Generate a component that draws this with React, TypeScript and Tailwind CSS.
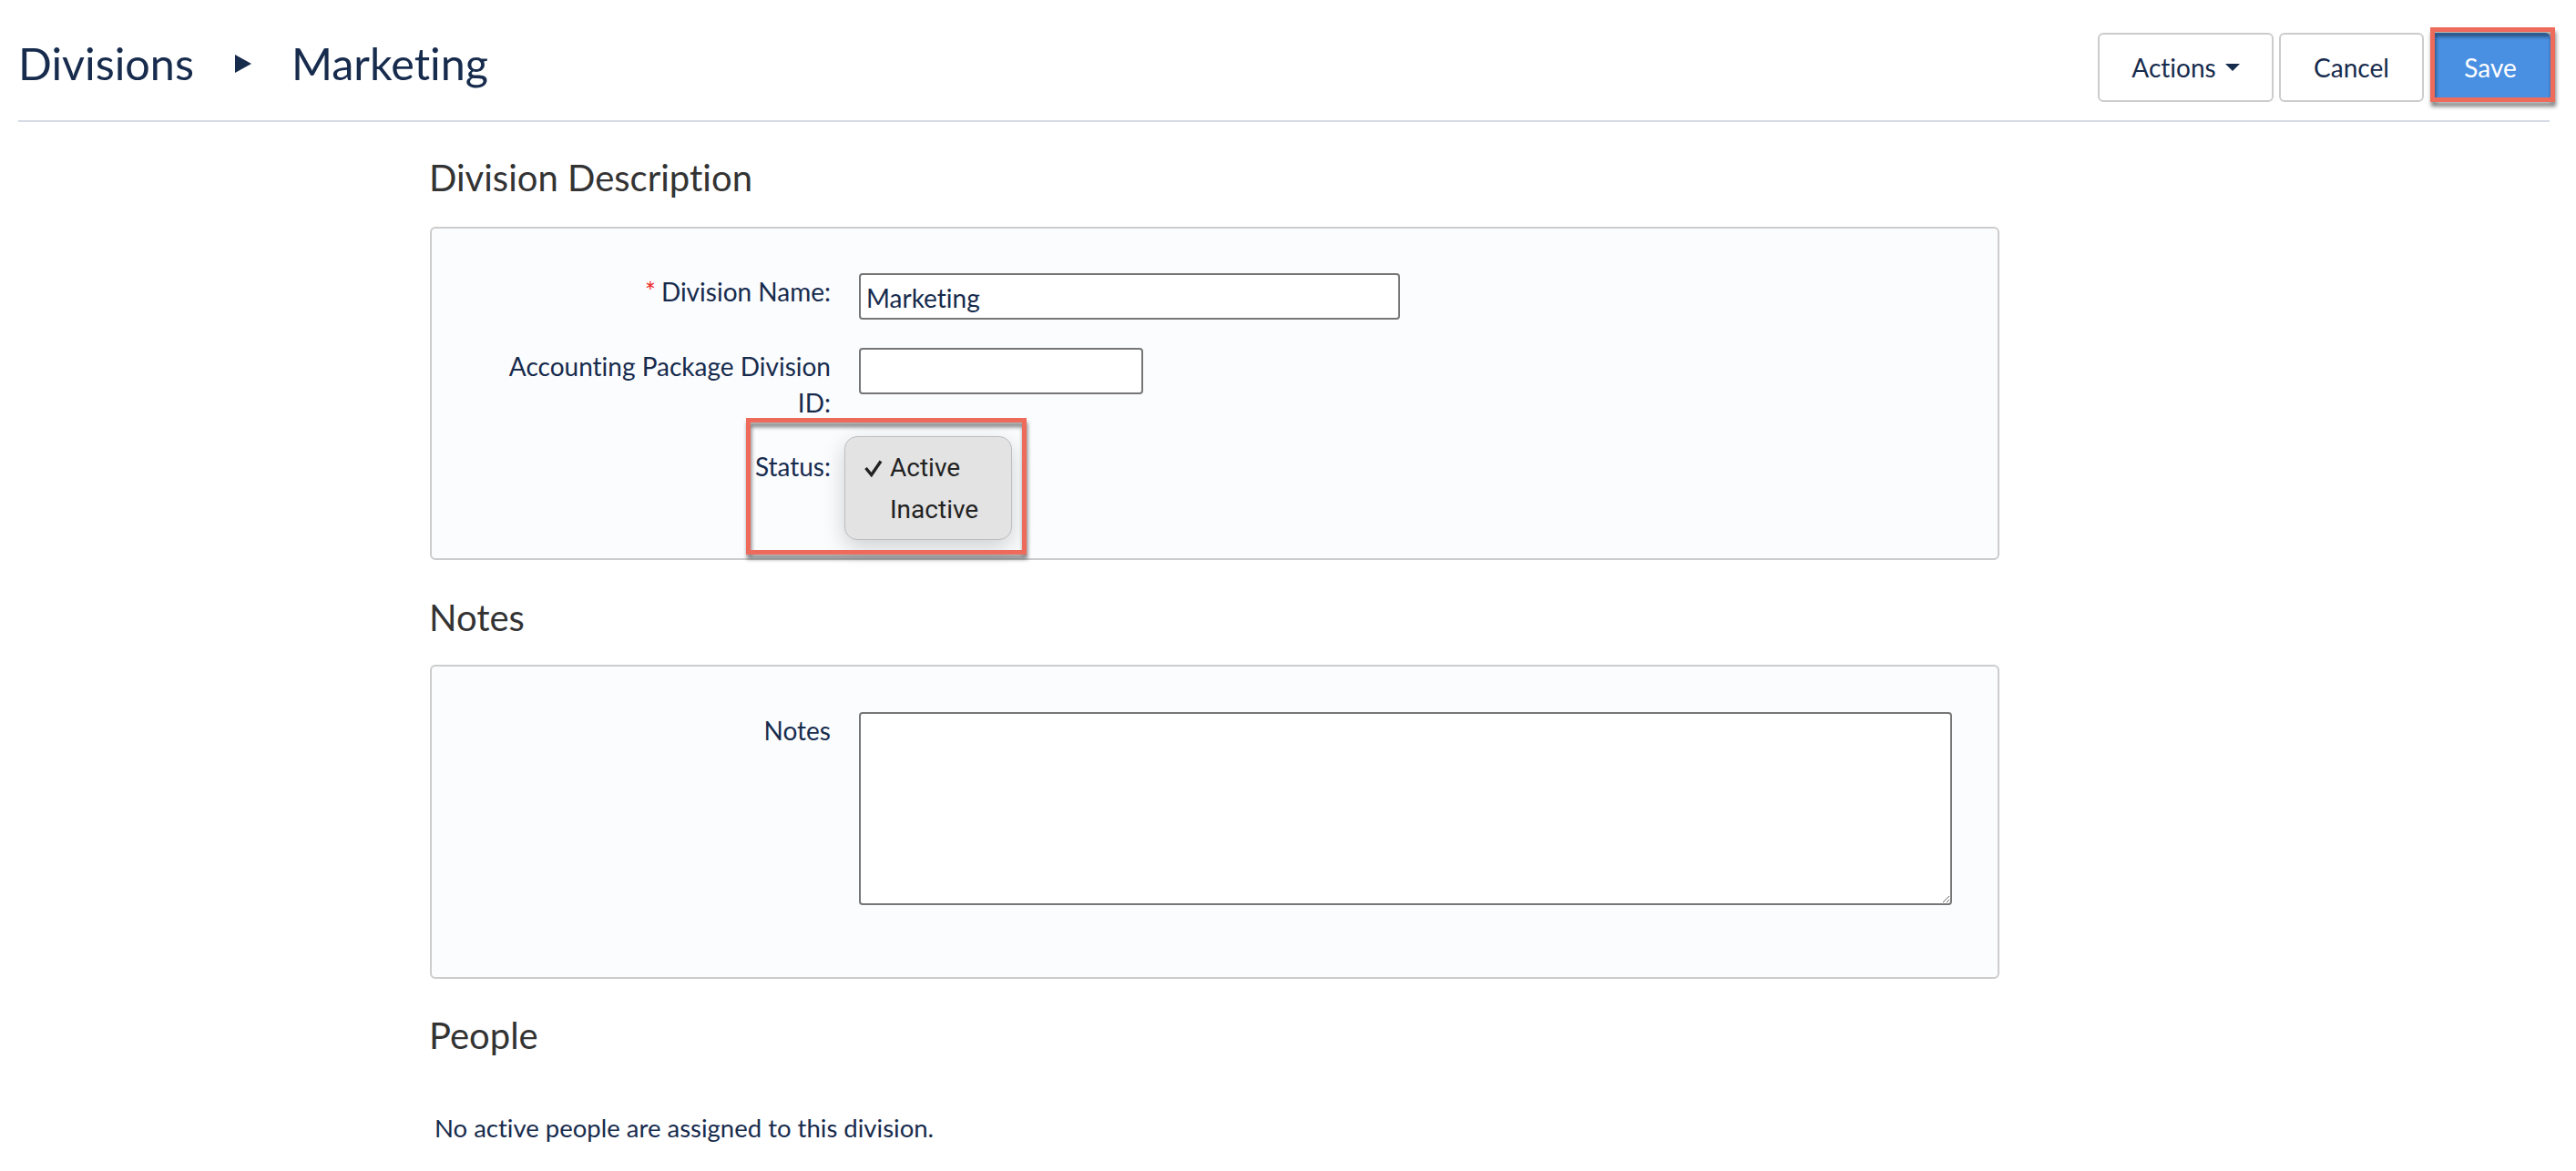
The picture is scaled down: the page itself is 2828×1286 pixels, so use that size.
function FieldLabel({ children }: { children: React.ReactNode }) {
  return (
    <label className="w-[370px] ml-[68px] shrink-0 text-right text-[#172b4d] text-[28px] leading-[40px]">
      {children}
    </label>
  );
}

function SectionTitle({ children, className }: { children: React.ReactNode; className: string }) {
  return <h2 className={`-ml-[1px] text-[#333333] text-[40px] leading-[44px] ${className}`}>{children}</h2>;
}

export default function App() {
  return (
    <div className="relative h-[1286px] w-full overflow-hidden bg-white font-['Lato',sans-serif] [font-variant-ligatures:none]">
      <header className="mx-[20px] mr-[29px] h-[134px] border-b-2 border-[#d5dae3] flex justify-between items-start">
        <div className="flex items-center text-[#172b4d] text-[48.5px] leading-[58px] pt-[40px]">
          <span>Divisions</span>
          <svg viewBox="0 0 18 20" className="w-[18px] h-[20px] ml-[45px] mr-[44px] mt-[2px]">
            <path d="M0 0 L18 10 L0 20 Z" fill="#172b4d" />
          </svg>
          <span>Marketing</span>
        </div>
        <div className="flex pt-[36px] -mr-[1px] text-[28px]">
          <button className="w-[193px] h-[76px] rounded-[6px] border-2 border-[#cccccc] bg-white text-[#172b4d] flex items-center justify-center gap-[10px]">
            Actions
            <svg viewBox="0 0 16 8" className="w-[16px] h-[8px]">
              <path d="M0 0 H16 L8 8 Z" fill="#172b4d" />
            </svg>
          </button>
          <button className="ml-[6px] w-[159px] h-[76px] rounded-[6px] border-2 border-[#cccccc] bg-white text-[#172b4d]">
            Cancel
          </button>
          <button className="ml-[7px] w-[132px] h-[76px] rounded-[6px] bg-[#4a90e2] text-white">
            Save
          </button>
        </div>
      </header>

      <main className="ml-[472px] w-[1723px]">
        <SectionTitle className="pt-[39px] pb-[32px]">Division Description</SectionTitle>

        <section className="h-[366px] rounded-[6px] border-2 border-[#cccccc] bg-[#fbfcfe] pt-[49px]">
          <div className="flex gap-[31px]">
            <FieldLabel>
              <span className="text-[#ee2a1e] mr-[6px]">*</span>Division Name:
            </FieldLabel>
            <input
              defaultValue="Marketing"
              className="w-[594px] h-[51px] rounded-[4px] border-2 border-[#767676] bg-white px-[6px] pt-[2px] text-[28px] text-[#172b4d] outline-none"
            />
          </div>
          <div className="flex gap-[31px] mt-[31px]">
            <FieldLabel>Accounting Package Division ID:</FieldLabel>
            <input className="w-[312px] h-[51px] rounded-[4px] border-2 border-[#767676] bg-white" />
          </div>
          <div className="relative flex gap-[31px] mt-[30px]">
            <FieldLabel>Status:</FieldLabel>
            <div className="absolute left-[453px] top-[-13px] w-[184px] h-[114px] rounded-[14px] border border-[#bdbdbd] bg-[#e3e3e3] shadow-[0_8px_24px_rgba(0,0,0,0.18)] font-['Roboto',sans-serif] text-[28px] leading-[46px] text-[#222222]">
              <div className="flex items-center h-[46px] pl-[21px] mt-[11px]">
                <svg viewBox="0 0 20 19" className="w-[20px] h-[19px]">
                  <path d="M1.5 9 L7.7 16.5 L18 1.5" fill="none" stroke="#222222" strokeWidth="3.4" />
                </svg>
                <span className="ml-[8px]">Active</span>
              </div>
              <div className="h-[46px] pl-[49px]">Inactive</div>
            </div>
          </div>
        </section>

        <SectionTitle className="pt-[41px] pb-[30px]">Notes</SectionTitle>

        <section className="h-[345px] rounded-[6px] border-2 border-[#cccccc] bg-[#fbfcfe] pt-[50px]">
          <div className="flex gap-[31px]">
            <FieldLabel>Notes</FieldLabel>
            <textarea className="w-[1200px] h-[212px] rounded-[4px] border-2 border-[#767676] bg-white outline-none" />
          </div>
        </section>

        <SectionTitle className="pt-[40px]">People</SectionTitle>
        <p className="ml-[5px] mt-[60px] text-[27.5px] leading-[40px] text-[#172b4d]">
          No active people are assigned to this division.
        </p>
      </main>

      {/* annotation boxes drawn on top of the screenshot */}
      <div className="absolute left-[2668px] top-[30px] w-[137px] h-[82px] border-[5px] border-[#ee6a5a] drop-shadow-[1px_5px_2px_rgba(0,0,0,0.5)]" />
      <div className="absolute left-[819px] top-[459px] w-[308px] h-[150px] border-[5px] border-[#ee6a5a] drop-shadow-[1px_5px_2px_rgba(0,0,0,0.5)]" />
    </div>
  );
}
